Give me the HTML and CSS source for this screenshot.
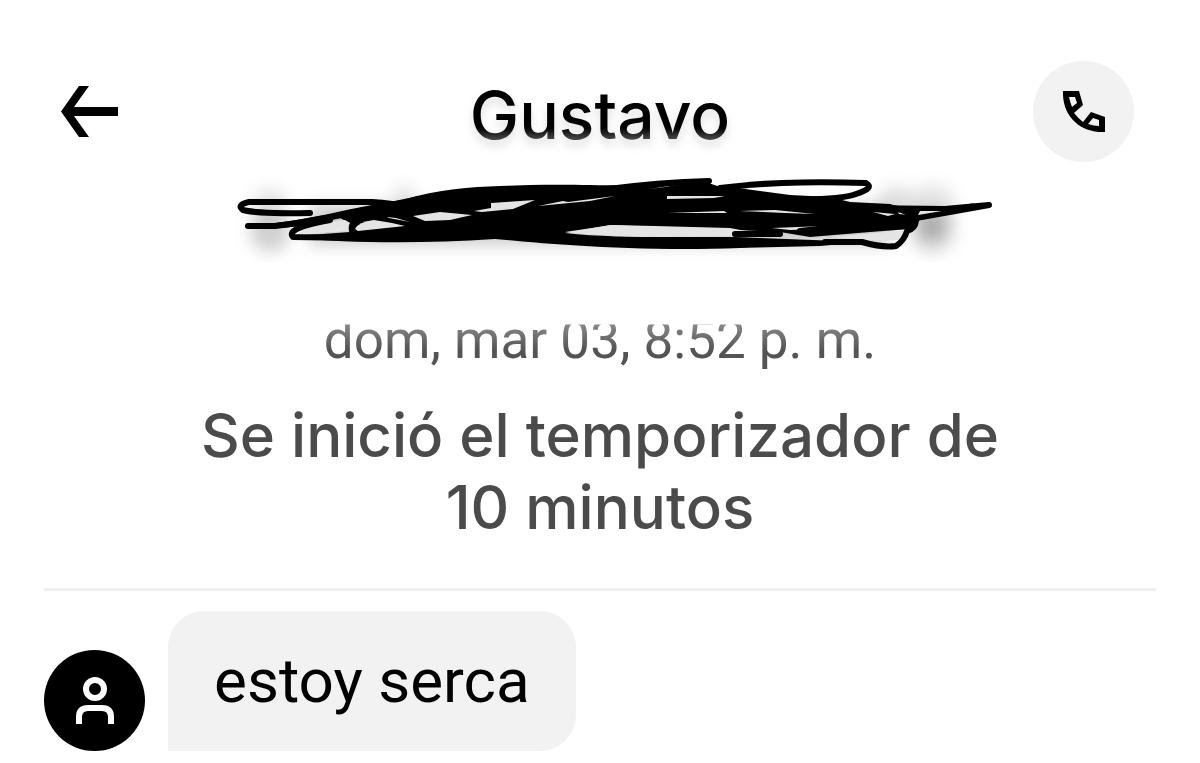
FILE: index.html
```html
<!DOCTYPE html>
<html lang="es">
<head>
    <meta charset="UTF-8">
    <meta name="viewport" content="width=device-width, initial-scale=1.0">
    <title>Gustavo</title>
    <link rel="stylesheet" href="styles.css">
</head>
<body>

<header class="chat-header">
    <button type="button" class="back-button" aria-label="Volver">
        <svg width="58" height="52" viewBox="0 0 58 52">
            <path d="M18 0H28L13 21H57V30H13L28 51H18L0 25.500Z"/>
        </svg>
    </button>
    <h1 class="contact-name">Gustavo</h1>
    <button type="button" class="call-button" aria-label="Llamar">
        <svg width="42" height="42" viewBox="0 0 42 42">
            <path fill-rule="evenodd" d="M0 0H16L20 14L11 22Q15 27 20 31L28 21L42 26V41C17 42 -1 25 0 0ZM6 6Q7 11 9 16L14 12L12 6ZM30 27L25 33Q31 35 36 35V29Z"/>
        </svg>
    </button>
</header>

<svg class="scribble" viewBox="200 162 800 100" aria-hidden="true">
    <defs>
        <filter id="smudge" x="-50%" y="-50%" width="200%" height="200%">
            <feGaussianBlur stdDeviation="8"/>
        </filter>
    </defs>

    <!-- grey smudges -->
    <g filter="url(#smudge)" fill="#000">
        <circle cx="270" cy="206" r="18" opacity="0.1"/>
        <circle cx="270" cy="232" r="20" opacity="0.18"/>
        <circle cx="404" cy="196" r="10" opacity="0.12"/>
        <circle cx="932" cy="208" r="24" opacity="0.1"/>
        <circle cx="932" cy="230" r="22" opacity="0.18"/>
        <circle cx="932" cy="229" r="7" opacity="0.3"/>
        <circle cx="896" cy="204" r="18" opacity="0.12"/>
        <rect x="310" y="205" width="580" height="40" opacity="0.2"/>
    </g>

    <!-- solid part of the scribble -->
    <path d="M247 224L275 223C310 219 345 210 372 205L402 200C440 189 470 187 500 186C560 183 600 186 640 185L700 180L720 187L745 189L790 195L830 197L850 202L890 204L905 210L915 218L910 229L870 232L810 237L780 232L735 230L610 225L565 233C610 238 660 237 735 237L865 242L820 246L740 248C640 252 550 244 495 239C420 244 350 243 294 238L295 236L350 232L352 224L340 218C320 221 300 228 275 228L247 228Z"/>

    <!-- gaps between the strokes -->
    <g fill="#e4e4e4">
        <path d="M298 234Q306 224 345 220L350 223Q346 227 350 231Z"/>
        <path d="M355 229Q358 222 374 220L392 223L405 226L358 231Z"/>
        <path d="M375 203L402 201L374 206Z"/>
        <path d="M387 217L396 218L410 222L389 218Z"/>
        <path d="M413 216L440 212L472 215L450 220L425 221Z"/>
        <path d="M491 203L535 200L513 209L482 212L474 211L491 208Z"/>
        <path d="M538 206L563 201L568 202L615 196L590 201Z"/>
        <path d="M650 189L680 184L665 187Z"/>
        <path d="M667 196L725 196L714 198L667 199Z"/>
        <path d="M668 213L724 211L727 213Z"/>
        <path d="M565 232L612 225L655 226L730 228L746 231L733 232L732 236L670 237Q610 237 565 232Z"/>
        <path d="M740 211L775 210L815 214L785 213Z"/>
        <path d="M772 228L850 225L815 229L790 230Z"/>
        <path d="M830 237L908 230L898 240L868 240Z"/>
        <path d="M873 212L895 214L888 216Z"/>
        <path d="M898 212L908 215L899 214Z"/>
    </g>

    <!-- loose strokes -->
    <g class="strokes">
        <path d="M250 202H372Q392 203 412 208M249 202Q236 205 243 210Q258 214 310 213"/>
        <path d="M248 226L275 226Q310 222 355 212L420 199"/>
        <path d="M330 220Q285 228 293 237L360 238"/>
        <path d="M352 231Q350 222 363 216"/>
        <path d="M600 190Q660 182 709 181Q705 187 655 192"/>
        <path d="M720 188Q780 180 866 183Q875 188 856 194Q840 200 790 199"/>
        <path d="M735 234L780 234M880 207Q908 207 916 221Q915 229 907 231Q904 241 896 246Q883 248 862 242L825 242"/>
        <path d="M860 208L945 209L989 205L916 218L800 231"/>
    </g>
    <path d="M900 207L945 208L975 203L945 214L912 222Z"/>
    <path d="M920 211L942 211L918 215Z" fill="#e4e4e4"/>
</svg>

<main>
    <section class="notice">
        <p class="notice-date">dom, mar 03, 8:52 p. m.</p>
        <p class="notice-text">Se inició el temporizador de 10 minutos</p>
    </section>

    <div class="message">
        <div class="avatar">
            <svg width="38" height="47" viewBox="0 0 38 47">
                <circle cx="19" cy="12" r="9"/>
                <path d="M3 47V40Q3 31 12 31H26Q35 31 35 40V47"/>
            </svg>
        </div>
        <p class="bubble">estoy serca</p>
    </div>
</main>

</body>
</html>
```

FILE: styles.css
```css
body {
    margin: 0;
    background-color: #fff;
    color: #000;
    font-family: Roboto, Arial, sans-serif;
}

h1, p {
    margin: 0;
}

button {
    border: none;
    padding: 0;
    background: none;
    cursor: pointer;
}

svg {
    display: block;
}

.chat-header {
    display: grid;
    grid-template-columns: 1fr auto 1fr;
    align-items: center;
    padding: 61px 61px 0;
}

.back-button {
    justify-self: start;
}

.contact-name {
    padding: 6px 20px 0;
    font-family: Inter, Roboto, sans-serif;
    font-size: 66px;
    font-weight: 500;
    line-height: 72px;
    background: linear-gradient(#000 70%, #444 84%);
    -webkit-background-clip: text;
    background-clip: text;
    color: transparent;
    filter: drop-shadow(0 6px 5px rgba(0, 0, 0, 0.12));
}

.call-button {
    display: flex;
    justify-content: center;
    align-items: center;
    justify-self: end;
    width: 101px;
    height: 101px;
    margin-right: 5px;
    border-radius: 50%;
    background-color: #f2f2f2;
}

.scribble {
    width: 800px;
    max-width: 100%;
    margin: 0 auto;
}

.strokes {
    fill: none;
    stroke: #000;
    stroke-width: 6;
    stroke-linecap: round;
    stroke-linejoin: round;
}

.notice {
    margin: 0 44px;
    padding: 42px 140px 45px;
    border-bottom: 3px solid #f0f0f0;
    text-align: center;
}

.notice-date {
    padding-bottom: 23px;
    color: #545454;
    font-size: 53px;
    line-height: 72px;
    -webkit-mask-image: linear-gradient(transparent 20px, rgba(0, 0, 0, 0.7) 21px, #000 46px);
    mask-image: linear-gradient(transparent 20px, rgba(0, 0, 0, 0.7) 21px, #000 46px);
}

.notice-text {
    color: #4b4b4b;
    font-family: Inter, Roboto, sans-serif;
    font-size: 60px;
    font-weight: 500;
    line-height: 72px;
}

.message {
    display: flex;
    align-items: flex-end;
    gap: 23px;
    padding: 20px 44px 12px;
}

.avatar {
    display: flex;
    justify-content: center;
    align-items: center;
    flex-shrink: 0;
    width: 101px;
    height: 101px;
    border-radius: 50%;
    background-color: #000;
}

.avatar svg {
    fill: none;
    stroke: #fff;
    stroke-width: 6;
}

.bubble {
    padding: 34px 46px;
    border-radius: 36px 36px 36px 0;
    background-color: #f2f2f2;
    font-size: 62px;
    line-height: 72px;
}
```
